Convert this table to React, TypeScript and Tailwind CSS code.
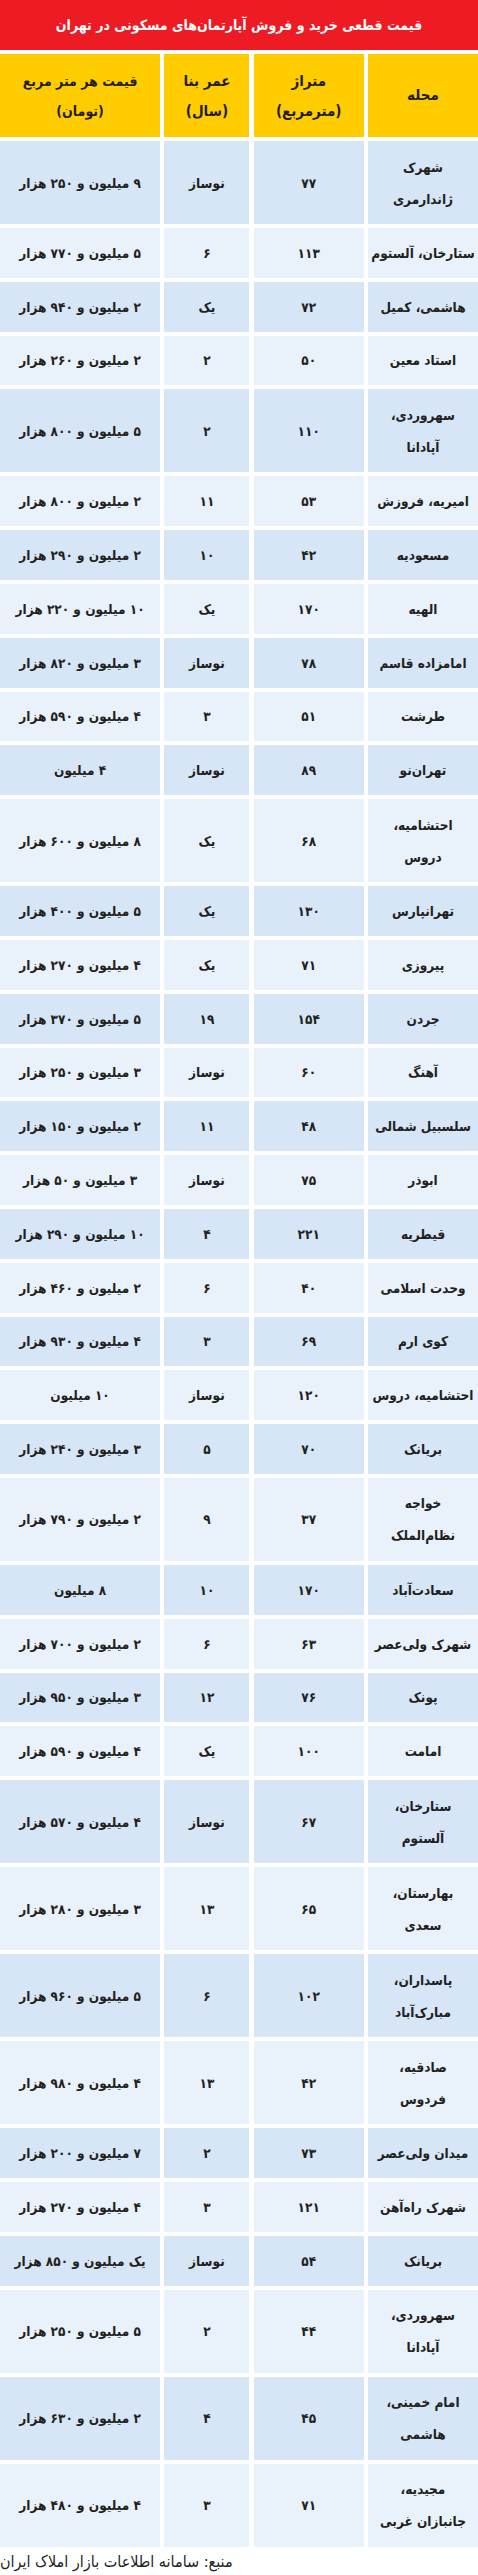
import React from "react";

type Row = {
    area: string[];
    size: string;
    age: string;
    price: string;
};

const ROWS: Row[] = [
    { area: ["شهرک", "ژاندارمری"], size: "۷۷", age: "نوساز", price: "۹ میلیون و ۲۵۰ هزار" },
    { area: ["ستارخان، آلستوم"], size: "۱۱۳", age: "۶", price: "۵ میلیون و ۷۷۰ هزار" },
    { area: ["هاشمی، کمیل"], size: "۷۲", age: "یک", price: "۲ میلیون و ۹۴۰ هزار" },
    { area: ["استاد معین"], size: "۵۰", age: "۲", price: "۲ میلیون و ۲۶۰ هزار" },
    { area: ["سهروردی،", "آپادانا"], size: "۱۱۰", age: "۲", price: "۵ میلیون و ۸۰۰ هزار" },
    { area: ["امیریه، فروزش"], size: "۵۳", age: "۱۱", price: "۲ میلیون و ۸۰۰ هزار" },
    { area: ["مسعودیه"], size: "۴۲", age: "۱۰", price: "۲ میلیون و ۲۹۰ هزار" },
    { area: ["الهیه"], size: "۱۷۰", age: "یک", price: "۱۰ میلیون و ۲۲۰ هزار" },
    { area: ["امامزاده قاسم"], size: "۷۸", age: "نوساز", price: "۳ میلیون و ۸۲۰ هزار" },
    { area: ["طرشت"], size: "۵۱", age: "۳", price: "۴ میلیون و ۵۹۰ هزار" },
    { area: ["تهران‌نو"], size: "۸۹", age: "نوساز", price: "۴ میلیون" },
    { area: ["احتشامیه،", "دروس"], size: "۶۸", age: "یک", price: "۸ میلیون و ۶۰۰ هزار" },
    { area: ["تهرانپارس"], size: "۱۳۰", age: "یک", price: "۵ میلیون و ۴۰۰ هزار" },
    { area: ["پیروزی"], size: "۷۱", age: "یک", price: "۴ میلیون و ۲۷۰ هزار" },
    { area: ["جردن"], size: "۱۵۴", age: "۱۹", price: "۵ میلیون و ۳۷۰ هزار" },
    { area: ["آهنگ"], size: "۶۰", age: "نوساز", price: "۳ میلیون و ۲۵۰ هزار" },
    { area: ["سلسبیل شمالی"], size: "۴۸", age: "۱۱", price: "۲ میلیون و ۱۵۰ هزار" },
    { area: ["ابوذر"], size: "۷۵", age: "نوساز", price: "۳ میلیون و ۵۰ هزار" },
    { area: ["قیطریه"], size: "۲۲۱", age: "۴", price: "۱۰ میلیون و ۲۹۰ هزار" },
    { area: ["وحدت اسلامی"], size: "۴۰", age: "۶", price: "۲ میلیون و ۴۶۰ هزار" },
    { area: ["کوی ارم"], size: "۶۹", age: "۳", price: "۴ میلیون و ۹۳۰ هزار" },
    { area: ["احتشامیه، دروس"], size: "۱۲۰", age: "نوساز", price: "۱۰ میلیون" },
    { area: ["بریانک"], size: "۷۰", age: "۵", price: "۳ میلیون و ۲۴۰ هزار" },
    { area: ["خواجه", "نظام‌الملک"], size: "۳۷", age: "۹", price: "۲ میلیون و ۷۹۰ هزار" },
    { area: ["سعادت‌آباد"], size: "۱۷۰", age: "۱۰", price: "۸ میلیون" },
    { area: ["شهرک ولی‌عصر"], size: "۶۳", age: "۶", price: "۲ میلیون و ۷۰۰ هزار" },
    { area: ["پونک"], size: "۷۶", age: "۱۲", price: "۳ میلیون و ۹۵۰ هزار" },
    { area: ["امامت"], size: "۱۰۰", age: "یک", price: "۴ میلیون و ۵۹۰ هزار" },
    { area: ["ستارخان،", "آلستوم"], size: "۶۷", age: "نوساز", price: "۴ میلیون و ۵۷۰ هزار" },
    { area: ["بهارستان،", "سعدی"], size: "۶۵", age: "۱۳", price: "۳ میلیون و ۲۸۰ هزار" },
    { area: ["پاسداران،", "مبارک‌آباد"], size: "۱۰۲", age: "۶", price: "۵ میلیون و ۹۶۰ هزار" },
    { area: ["صادقیه،", "فردوس"], size: "۴۲", age: "۱۳", price: "۴ میلیون و ۹۸۰ هزار" },
    { area: ["میدان ولی‌عصر"], size: "۷۳", age: "۲", price: "۷ میلیون و ۲۰۰ هزار" },
    { area: ["شهرک راه‌آهن"], size: "۱۲۱", age: "۳", price: "۴ میلیون و ۲۷۰ هزار" },
    { area: ["بریانک"], size: "۵۴", age: "نوساز", price: "یک میلیون و ۸۵۰ هزار" },
    { area: ["سهروردی،", "آپادانا"], size: "۴۴", age: "۲", price: "۵ میلیون و ۲۵۰ هزار" },
    { area: ["امام خمینی،", "هاشمی"], size: "۴۵", age: "۴", price: "۲ میلیون و ۶۳۰ هزار" },
    { area: ["مجیدیه،", "جانبازان غربی"], size: "۷۱", age: "۳", price: "۴ میلیون و ۴۸۰ هزار" },
];

function Cell({ children, tall, dark }: { children: React.ReactNode; tall: boolean; dark: boolean }) {
    return (
        <div
            className={`flex flex-col items-center justify-center text-center whitespace-nowrap leading-[32px] ${
                tall ? "h-[83px]" : "h-[49.8px]"
            } ${dark ? "bg-[#d6e6f6]" : "bg-[#e9f1fa]"}`}
        >
            {children}
        </div>
    );
}

export default function App() {
    return (
        <div
            dir="rtl"
            className="w-[478px] h-[2575px] bg-white text-[#231f20] overflow-hidden"
            style={{ fontFamily: '"DejaVu Sans Condensed", "DejaVu Sans", sans-serif' }}
        >
            {/* title */}
            <div className="h-[50px] bg-[#ed1c24] flex items-center justify-center text-white font-bold text-[14px]">
                قیمت قطعی خرید و فروش آپارتمان‌های مسکونی در تهران
            </div>

            <div className="mt-[4px] grid grid-cols-[110px_110px_85px_1fr] gap-x-[4.3px] gap-y-[4px] text-[13.5px] font-bold">
                {/* header */}
                <div className="h-[83px] bg-[#ffcc00] flex items-center justify-center text-[15px]">محله</div>
                <div className="h-[83px] bg-[#ffcc00] flex flex-col items-center justify-center text-[15px] leading-[30px]">
                    <span>متراژ</span>
                    <span>(مترمربع)</span>
                </div>
                <div className="h-[83px] bg-[#ffcc00] flex flex-col items-center justify-center text-[15px] leading-[30px]">
                    <span>عمر بنا</span>
                    <span>(سال)</span>
                </div>
                <div className="h-[83px] bg-[#ffcc00] flex flex-col items-center justify-center text-[14px] leading-[30px]">
                    <span>قیمت هر متر مربع</span>
                    <span>(تومان)</span>
                </div>

                {ROWS.map((r, i) => {
                    const tall = r.area.length > 1;
                    const dark = i % 2 === 0;
                    return (
                        <React.Fragment key={i}>
                            <Cell tall={tall} dark={dark}>
                                {r.area.map((line) => (
                                    <span key={line}>{line}</span>
                                ))}
                            </Cell>
                            <Cell tall={tall} dark={dark}>{r.size}</Cell>
                            <Cell tall={tall} dark={dark}>{r.age}</Cell>
                            <Cell tall={tall} dark={dark}>{r.price}</Cell>
                        </React.Fragment>
                    );
                })}
            </div>

            <div className="pt-[2px] text-left text-[16px] leading-[26px]">منبع: سامانه اطلاعات بازار املاک ایران</div>
        </div>
    );
}
